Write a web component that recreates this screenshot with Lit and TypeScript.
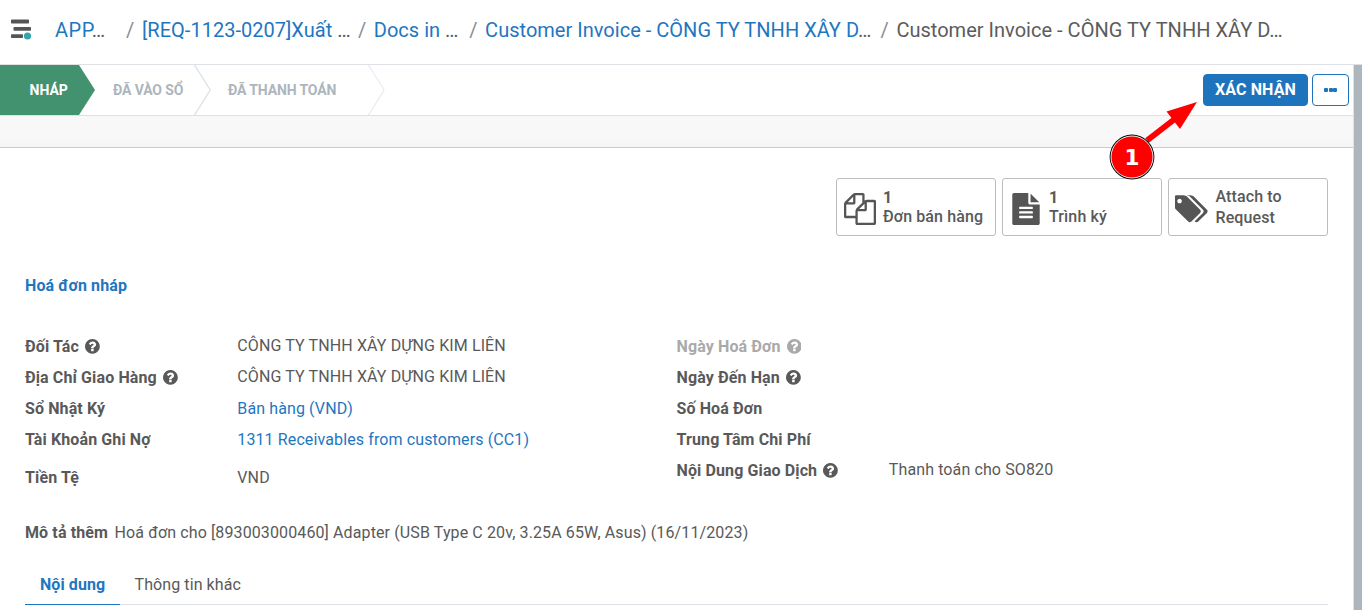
import { LitElement, html, css, svg, nothing } from "lit";
import { customElement, property } from "lit/decorators.js";

const GLYPHS: Record<string, { box: string; d: string }> = {
  question: {
    box: "128 128 1536 1536",
    d: "M1024 1376v-192q0-14-9-23t-23-9h-192q-14 0-23 9t-9 23v192q0 14 9 23t23 9h192q14 0 23-9t9-23zm256-672q0-88-55.5-163t-138.5-116-170-41q-243 0-371 213-15 24 8 42l132 100q7 6 19 6 16 0 25-12 53-68 86-92 34-24 86-24 48 0 85.5 26t37.5 59q0 38-20 61t-68 45q-63 28-115.5 86.5t-52.5 125.5v36q0 14 9 23t23 9h192q14 0 23-9t9-23q0-19 21.5-49.5t54.5-49.5q32-18 49-28.5t46-35 44.5-48 28-60.5 12.5-81zm384 192q0 209-103 385.5t-279.5 279.5-385.500 103-385.500-103-279.500-279.500-103-385.500 103-385.500 279.500-279.500 385.500-103 385.500 103 279.500 279.500 103 385.500z",
  },
  files: {
    box: "0 0 1792 1792",
    d: "M1696 384q40 0 68 28t28 68v1216q0 40-28 68t-68 28h-960q-40 0-68-28t-28-68v-288h-544q-40 0-68-28t-28-68v-672q0-40 20-88t48-76l408-408q28-28 76-48t88-20h416q40 0 68 28t28 68v328q68-40 128-40h416zm-544 213l-299 299h299v-299zm-640-384l-299 299h299v-299zm196 647l316-316v-416h-384v416q0 40-28 68t-68 28h-416v640h512v-256q0-40 20-88t48-76zm956 804v-1152h-384v416q0 40-28 68t-68 28h-416v640h896z",
  },
  fileText: {
    box: "0 0 1792 1792",
    d: "M1596 476q14 14 28 36h-472v-472q22 14 36 28zm-476 164h544v1056q0 40-28 68t-68 28h-1344q-40 0-68-28t-28-68v-1600q0-40 28-68t68-28h800v544q0 40 28 68t68 28zm160 736v-64q0-14-9-23t-23-9h-704q-14 0-23 9t-9 23v64q0 14 9 23t23 9h704q14 0 23-9t9-23zm0-256v-64q0-14-9-23t-23-9h-704q-14 0-23 9t-9 23v64q0 14 9 23t23 9h704q14 0 23-9t9-23zm0-256v-64q0-14-9-23t-23-9h-704q-14 0-23 9t-9 23v64q0 14 9 23t23 9h704q14 0 23-9t9-23z",
  },
  tags: {
    box: "0 0 1856 1792",
    d: "M384 448q0-53-37.500-90.500t-90.500-37.500-90.500 37.500-37.500 90.500 37.500 90.500 90.500 37.500 90.500-37.500 37.500-90.500zm1067 576q0 53-37 90l-491 492q-39 37-91 37-53 0-90-37l-715-716q-38-37-64.500-101t-26.500-117v-416q0-52 38-90t90-38h416q53 0 117 26.500t102 64.500l715 714q37 39 37 91zm384 0q0 53-37 90l-491 492q-39 37-91 37-36 0-59-14t-53-45l470-470q37-37 37-90 0-52-37-91l-715-714q-38-38-102-64.500t-117-26.500h224q53 0 117 26.500t102 64.500l715 714q37 39 37 91z",
  },
};

@customElement("app-glyph")
class AppGlyph extends LitElement {
  @property() name = "";
  static styles = css`
    :host { display: inline-block; }
    svg { display: block; width: 100%; height: 100%; fill: currentColor; }
  `;
  render() {
    const g = GLYPHS[this.name];
    return g ? html`<svg viewBox=${g.box}>${svg`<path d=${g.d}></path>`}</svg>` : nothing;
  }
}

interface Field { label: string; value?: string; link?: boolean; help?: boolean; muted?: boolean; cls?: string; }

const LEFT: Field[] = [
  { label: "Đối Tác", value: "CÔNG TY TNHH XÂY DỰNG KIM LIÊN", help: true, cls: "raised" },
  { label: "Địa Chỉ Giao Hàng", value: "CÔNG TY TNHH XÂY DỰNG KIM LIÊN", help: true, cls: "raised" },
  { label: "Sổ Nhật Ký", value: "Bán hàng (VND)", link: true },
  { label: "Tài Khoản Ghi Nợ", value: "1311 Receivables from customers (CC1)", link: true },
  { label: "Tiền Tệ", value: "VND", cls: "spaced" },
];
const RIGHT: Field[] = [
  { label: "Ngày Hoá Đơn", help: true, muted: true },
  { label: "Ngày Đến Hạn", help: true },
  { label: "Số Hoá Đơn" },
  { label: "Trung Tâm Chi Phí" },
  { label: "Nội Dung Giao Dịch", value: "Thanh toán cho SO820", help: true, cls: "raised" },
];

@customElement("app-root")
class AppRoot extends LitElement {
  static styles = css`
    :host {
      display: flex; flex-direction: column; position: relative;
      width: 1362px; height: 610px; overflow: hidden; background: #fff;
      font-family: Roboto, "Liberation Sans", sans-serif; font-size: 16px; line-height: 24px; color: #595959;
      letter-spacing: 0.115px;
    }
    * { box-sizing: border-box; }
    .header { height: 65px; flex: none; border-bottom: 1px solid #dee2e6; display: flex; align-items: center; padding: 0 0 4px 11px; }
    .menu { width: 21px; height: 21px; margin: -2px 23px 0 0; flex: none; }
    .crumbs { display: flex; font-size: 20px; line-height: 30px; white-space: pre; letter-spacing: 0.02px; }
    .crumb { color: #5c5c5c; }
    .crumb a { color: #1f76c0; }
    .c1 { width: 71px; letter-spacing: 0.5px; } .c2 { width: 216px; } .c3 { width: 95.5px; } .c4 { width: 395.5px; }
    .slash { color: #868e96; width: 15.8px; }
    .c1 + .slash { width: 16px; }
    .body { flex: 1; display: flex; min-height: 0; }
    .page { width: 1354px; border-right: 1px solid #dee2e6; display: flex; flex-direction: column; }
    .scroll { width: 8px; background: #adb5bd; }
    .statusbar { height: 51px; flex: none; border-bottom: 1px solid #dee2e6; display: flex; justify-content: space-between; }
    .steps { display: flex; font-size: 14px; line-height: 50px; font-weight: 700; color: #adb5bd; white-space: nowrap; letter-spacing: -0.13px; }
    .step { position: relative; height: 50px; }
    .step svg { position: absolute; right: 0; top: 0; width: 17px; height: 50px; fill: none; stroke: #dee2e6; stroke-width: 1.4; }
    .s1 { width: 95px; padding-left: 29.5px; background: #43926f; color: #fff; letter-spacing: 0; clip-path: polygon(0 0, 79px 0, 95px 25px, 79px 50px, 0 50px); }
    .s2 { width: 116px; padding-left: 18px; }
    .s3 { width: 173.500px; padding-left: 17px; }
    .s3 svg { stroke-width: 0.9; }
    .actions { display: flex; gap: 4px; padding: 9px 4px 0 0; }
    .btn { height: 32px; border: 1px solid #1d74bd; border-radius: 4px; display: flex; align-items: center; justify-content: center; color: #1d74bd; }
    .confirm { width: 105px; background: #1d74bd; color: #fff; font-weight: 700; padding-bottom: 1px; }
    .more { width: 37px; gap: 0.6px; }
    .more i { width: 4px; height: 3.600px; border-radius: 1px; background: currentColor; }
    .band { height: 32px; flex: none; border-bottom: 1px solid #ccc; background: linear-gradient(#f8f8f8 70%, #f5f5f5); }
    .sheet { padding: 30px 25px 0; display: flex; flex-direction: column; }
    .stats { display: flex; justify-content: flex-end; gap: 6px; }
    .stat { width: 160px; height: 58px; border: 1px solid #bdbdbd; border-radius: 3px; display: flex; align-items: center; padding-left: 7px; font-weight: 500; line-height: 19px; }
    .stat app-glyph { width: 32px; height: 32px; margin: 3px 7px 0 0; color: #555; flex: none; }
    .stat .tags { width: 33px; margin: 3px 7px 0 -1px; }
    .stat b { font-weight: 700; display: block; }
    .stat .wide { line-height: 21px; padding-left: 0.5px; }
    .title { color: #1f76c0; font-weight: 700; margin-top: 38px; }
    .groups { display: flex; margin-top: 33px; }
    .group { width: 651.5px; display: flex; flex-direction: column; }
    .row { display: flex; height: 31px; line-height: 31px; white-space: nowrap; }
    .spaced { margin-top: 7px; }
    .label { width: 212.3px; font-weight: 700; display: flex; align-items: center; }
    .label app-glyph { width: 14.8px; height: 14.8px; margin-left: 6px; }
    .muted { color: #a9a9a9; }
    .raised .value { margin-top: -1px; }
    .link { color: #1f76c0; }
    .note { display: flex; gap: 6.6px; margin-top: 28px; }
    .note b { font-weight: 700; }
    .tabs { display: flex; height: 41px; margin-top: 19px; border-bottom: 1px solid #dee2e6; line-height: 42px; letter-spacing: 0.08px; }
    .tab { padding: 0 14.600px; height: 41px; }
    .active { color: #1f76c0; font-weight: 700; border-bottom: 1px solid #1d74bd; width: 95px; padding-left: 15px; }
    .callout { position: absolute; left: 1100px; top: 90px; width: 110px; height: 100px; }
    .pin { position: absolute; left: 1110px; top: 136px; width: 44px; height: 44px; text-align: center; color: #fff; font: 700 21.5px/44px "DejaVu Sans", sans-serif; }
  `;

  private row(f: Field) {
    return html`<div class="row ${f.cls ?? ""}">
      <div class="label ${f.muted ? "muted" : ""}">${f.label}${f.help ? html`<app-glyph name="question"></app-glyph>` : nothing}</div>
      <div class="value ${f.link ? "link" : ""}">${f.value ?? nothing}</div>
    </div>`;
  }

  render() {
    const chevron = html`<svg viewBox="0 0 17 50"><path d="M0.500 0L16.200 25L0.500 50"></path></svg>`;
    return html`
      <div class="header">
        <svg class="menu" viewBox="0 0 21 21">
          <g fill="#555"><rect x="0" y="0.600" width="18" height="3.900" rx="0.800"></rect><rect x="2.500" y="8" width="17.500" height="3.800" rx="0.800"></rect><rect x="0" y="15.200" width="12" height="3.900" rx="0.800"></rect></g>
          <circle cx="16.500" cy="17" r="3.600" fill="#35a5ad"></circle>
        </svg>
        <div class="crumbs">
          <span class="crumb c1"><a>APP</a>…</span><span class="slash">/</span>
          <span class="crumb c2"><a>[REQ-1123-0207]Xuất </a>…</span><span class="slash">/</span>
          <span class="crumb c3"><a>Docs in </a>…</span><span class="slash">/</span>
          <span class="crumb c4"><a>Customer Invoice - CÔNG TY TNHH XÂY D</a>…</span><span class="slash">/</span>
          <span class="crumb">Customer Invoice - CÔNG TY TNHH XÂY D…</span>
        </div>
      </div>
      <div class="body">
        <div class="page">
          <div class="statusbar">
            <div class="steps">
              <div class="step s1">NHÁP</div>
              <div class="step s2">ĐÃ VÀO SỔ${chevron}</div>
              <div class="step s3">ĐÃ THANH TOÁN${chevron}</div>
            </div>
            <div class="actions">
              <div class="btn confirm">XÁC NHẬN</div>
              <div class="btn more"><i></i><i></i><i></i></div>
            </div>
          </div>
          <div class="band"></div>
          <div class="sheet">
            <div class="stats">
              <div class="stat"><app-glyph name="files"></app-glyph><div><b>1</b>Đơn bán hàng</div></div>
              <div class="stat"><app-glyph name="fileText"></app-glyph><div><b>1</b>Trình ký</div></div>
              <div class="stat"><app-glyph class="tags" name="tags"></app-glyph><div class="wide">Attach to<br>Request</div></div>
            </div>
            <div class="title">Hoá đơn nháp</div>
            <div class="groups">
              <div class="group">${LEFT.map((f) => this.row(f))}</div>
              <div class="group">${RIGHT.map((f) => this.row(f))}</div>
            </div>
            <div class="note"><b>Mô tả thêm</b><span>Hoá đơn cho [893003000460] Adapter (USB Type C 20v, 3.25A 65W, Asus) (16/11/2023)</span></div>
            <div class="tabs"><div class="tab active">Nội dung</div><div class="tab">Thông tin khác</div></div>
          </div>
        </div>
        <div class="scroll"></div>
      </div>
      <svg class="callout" viewBox="1100 90 110 100">
        <path d="M1147 140.500L1178 116.500" stroke="#f00" stroke-width="6"></path>
        <path d="M1197 102L1166.500 111.500L1180 129Z" fill="#f00"></path>
        <circle cx="1132" cy="157" r="22.400" fill="#000"></circle>
        <circle cx="1132" cy="157" r="21" fill="#f00" stroke="#fff" stroke-width="0.900"></circle>
      </svg>
      <div class="pin">1</div>
    `;
  }
}
